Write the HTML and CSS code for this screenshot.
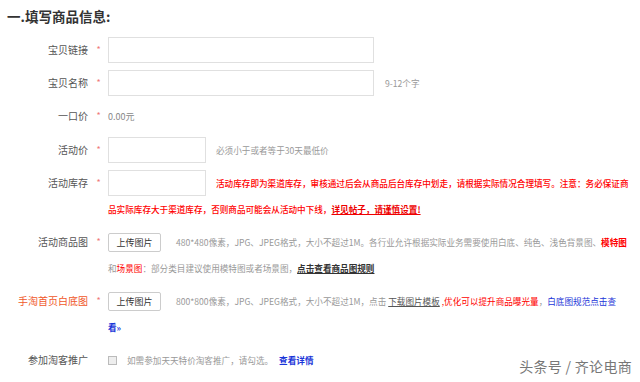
FILE: index.html
```html
<!DOCTYPE html>
<html lang="zh-CN">
<head>
  <meta charset="UTF-8" />
  <title>填写商品信息</title>
  <link rel="stylesheet" href="styles.css">
</head>
<body>

<div class="page">
  <h2 class="title">一.填写商品信息:</h2>

  <div class="form">
    <div class="row">
      <div class="label">宝贝链接</div>
      <div class="star">*</div>
      <div class="field"><span class="input wide"></span></div>
    </div>

    <div class="row">
      <div class="label">宝贝名称</div>
      <div class="star">*</div>
      <div class="field"><span class="input wide"></span><span class="hint gap11">9-12个字</span></div>
    </div>

    <div class="row">
      <div class="label">一口价</div>
      <div class="star">*</div>
      <div class="field"><span class="value">0.00元</span></div>
    </div>

    <div class="row">
      <div class="label">活动价</div>
      <div class="star">*</div>
      <div class="field"><span class="input short"></span><span class="hint gap10">必须小于或者等于30天最低价</span></div>
    </div>

    <div class="row">
      <div class="label">活动库存</div>
      <div class="star">*</div>
      <div class="field"><span class="input short"></span><span class="warn gap10">活动库存即为渠道库存，审核通过后会从商品后台库存中划走，请根据实际情况合理填写。注意：务必保证商</span><br><span class="warn">品实际库存大于渠道库存，否则商品可能会从活动中下线，<a class="warn-link">详见帖子，请谨慎设置!</a></span></div>
    </div>

    <div class="row">
      <div class="label">活动商品图</div>
      <div class="star">*</div>
      <div class="field"><span class="btn">上传图片</span><span class="hint gap15">480*480像素，JPG、JPEG格式，大小不超过1M。各行业允许根据实际业务需要使用白底、纯色、浅色背景图、<b class="red">模特图</b></span><br><span class="hint">和<span class="red">场景图</span>：部分类目建议使用模特图或者场景图，<a class="dark-link">点击查看商品图规则</a></span></div>
    </div>

    <div class="row">
      <div class="label orange">手淘首页白底图</div>
      <div class="star">*</div>
      <div class="field"><span class="btn">上传图片</span><span class="hint gap15">800*800像素，JPG、JPEG格式，大小不超过1M，点击 <a class="plain-link">下载图片模板</a> <span class="red-plain">,优化可以提升商品曝光量</span>，<a class="blue-link">白底图规范点击查</a></span><br><a class="blue-link bold">看»</a></div>
    </div>

    <div class="row">
      <div class="label">参加淘客推广</div>
      <div class="star"></div>
      <div class="field"><span class="check"></span><span class="hint gap10">如需参加天天特价淘客推广，请勾选。</span><a class="blue-link bold gap6">查看详情</a></div>
    </div>
  </div>

  <div class="watermark">头条号 / 齐论电商</div>
</div>

</body>
</html>
```

FILE: styles.css
```css
* {
  margin: 0;
  padding: 0;
  box-sizing: border-box;
}

body {
  background: #fff;
  font-family: "Noto Sans CJK SC", "Liberation Sans", sans-serif;
  color: #555;
}

.page {
  position: relative;
  width: 640px;
  height: 382px;
  padding: 6px 0 0 7px;
  overflow: hidden;
}

.title {
  font-size: 13.5px;
  font-weight: bold;
  color: #333;
  line-height: 20px;
  margin-bottom: 11px;
}

.form {
  display: flex;
  flex-direction: column;
  gap: 7px;
}

.row {
  display: grid;
  grid-template-columns: 81px 20px 1fr;
  line-height: 26px;
}

.label {
  text-align: right;
  font-size: 10px;
  color: #555;
}

.label.orange {
  color: #f0582a;
}

.star {
  text-align: center;
  font-size: 9px;
  color: #f07878;
  padding-left: 1px;
}

.field {
  white-space: nowrap;
  font-size: 8.6px;
}

.input {
  display: inline-block;
  vertical-align: top;
  height: 26px;
  border: 1px solid #e0e0e0;
  background: #fff;
}

.input.wide {
  width: 266px;
}

.input.short {
  width: 98px;
}

.btn {
  display: inline-block;
  vertical-align: middle;
  width: 53px;
  height: 19px;
  line-height: 17px;
  border: 1px solid #ccc;
  border-radius: 2px;
  background: #fff;
  color: #333;
  font-size: 9px;
  text-align: center;
  margin-top: -2px;
}

.check {
  display: inline-block;
  vertical-align: middle;
  width: 9px;
  height: 9px;
  border: 1px solid #bbb;
  background: #eee;
  margin-top: -2px;
}

.value {
  font-size: 9px;
  color: #888;
}

.hint {
  color: #999;
}

.gap6 { margin-left: 6px; }
.gap10 { margin-left: 10px; }
.gap11 { margin-left: 11px; }
.gap15 { margin-left: 15px; }

.warn {
  color: #f00;
  font-weight: 500;
}

.warn-link {
  color: #e00;
  font-weight: bold;
  text-decoration: underline;
}

.red {
  color: #f00;
}

.red-plain {
  color: #f00;
}

.dark-link {
  color: #333;
  font-weight: bold;
  text-decoration: underline;
}

.plain-link {
  color: #555;
  text-decoration: underline;
}

.blue-link {
  color: #1a35d8;
}

.bold {
  font-weight: bold;
}

.watermark {
  position: absolute;
  right: 8px;
  bottom: 6px;
  font-size: 14px;
  color: #777;
  text-shadow: 0 0 3px #fff;
  letter-spacing: 0.3px;
}
```
